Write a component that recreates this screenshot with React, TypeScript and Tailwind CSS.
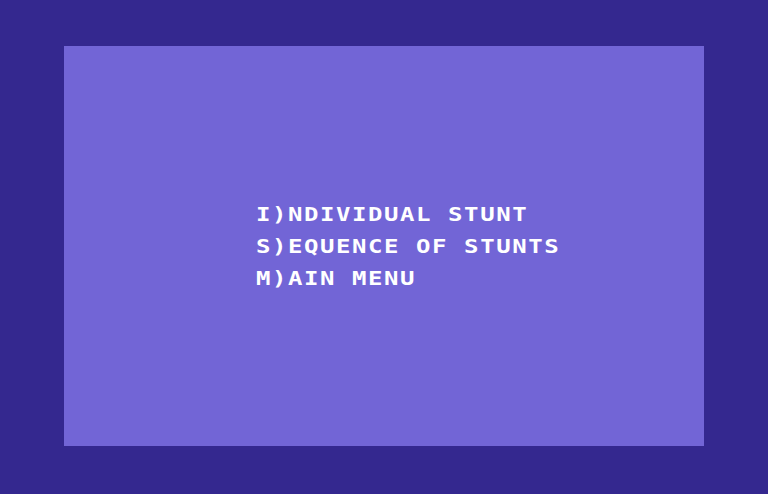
import React from "react";

// C64-style sub-menu: text rows sit on the 40x25 character grid (scaled 2x)
const options = ["I)NDIVIDUAL STUNT", "S)EQUENCE OF STUNTS", "M)AIN MENU"];

export default function App() {
  return (
    <div className="w-[768px] h-[494px] bg-[#34288f] pt-[46px] pl-[64px] overflow-hidden">
      <div className="w-[640px] h-[400px] bg-[#7265d6] pt-[160px] pl-[192px]">
        <div className="flex flex-col gap-4">
          {options.map((line) => (
            <div
              key={line}
              className="h-4 leading-4 text-[20px] font-bold text-white whitespace-pre tracking-[1.3px] scale-x-[1.2] origin-left"
              style={{ fontFamily: '"DejaVu Sans Mono", "Liberation Mono", monospace' }}
            >
              {line}
            </div>
          ))}
        </div>
      </div>
    </div>
  );
}
